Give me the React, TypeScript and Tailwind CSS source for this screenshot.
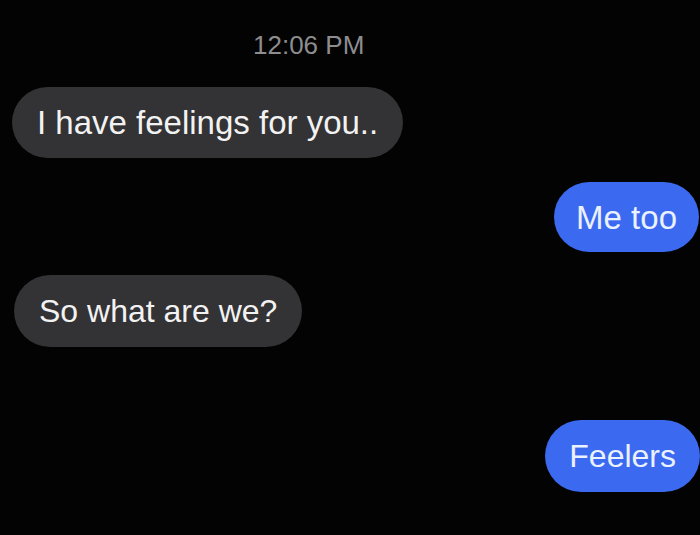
import React from "react";

type Msg = { text: string; mine: boolean };

function Bubble({ text, mine, className }: Msg & { className: string }) {
  return (
    <div
      className={
        "flex items-center rounded-full leading-none whitespace-nowrap " +
        (mine ? "bg-[#3b69ef] text-[#eaf1ff] " : "bg-[#333335] text-[#f2f2f2] ") +
        className
      }
    >
      {text}
    </div>
  );
}

export default function App() {
  return (
    <div
      className="w-[700px] h-[535px] bg-[#030303] overflow-hidden flex flex-col"
      style={{ fontFamily: '"Liberation Sans", Arial, sans-serif' }}
    >
      <div className="pt-[32px] pl-[253px] text-[26px] leading-none text-[#8d8d8f]">12:06 PM</div>

      <div className="flex pl-[12px] mt-[29px]">
        <Bubble text="I have feelings for you.." mine={false} className="h-[71px] px-[25px] text-[33px]" />
      </div>

      <div className="flex justify-end pr-[1px] mt-[24px]">
        <Bubble text="Me too" mine className="h-[70px] px-[22px] text-[33px]" />
      </div>

      <div className="flex pl-[14px] mt-[23px]">
        <Bubble text="So what are we?" mine={false} className="h-[72px] px-[25px] text-[32px]" />
      </div>

      <div className="flex justify-end pr-[0px] mt-[73px]">
        <Bubble text="Feelers" mine className="h-[72px] px-[24px] text-[32px]" />
      </div>
    </div>
  );
}
